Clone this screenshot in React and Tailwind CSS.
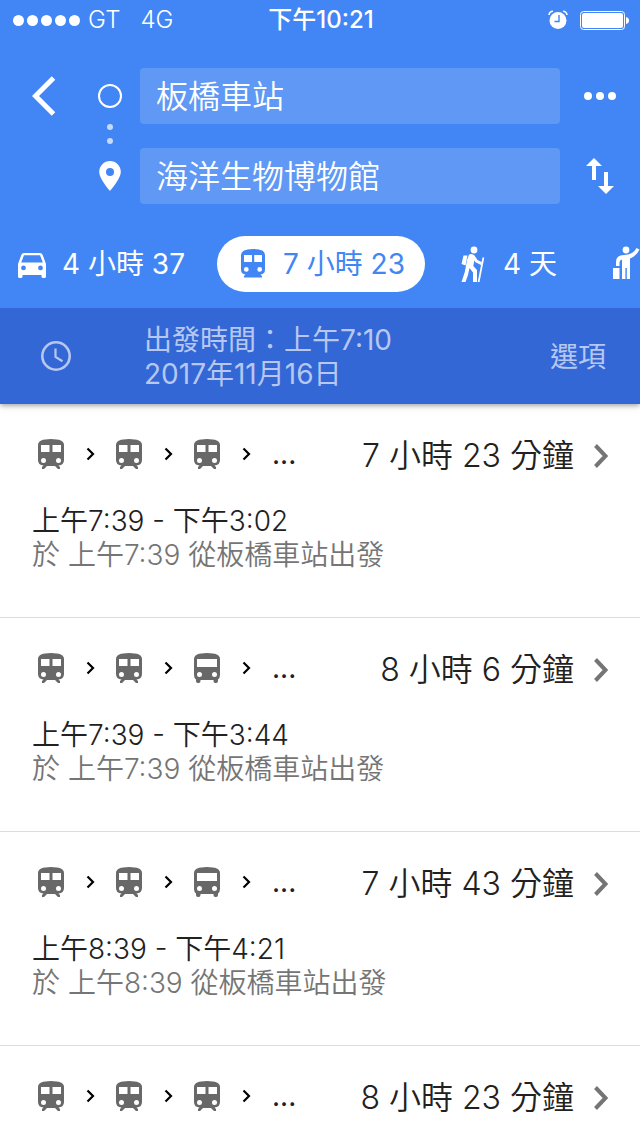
import React, { useState } from 'react';

const MODES = [
  { id: 'drive', label: '4 小時 37', name: '開車', Icon: CarIcon },
  { id: 'transit', label: '7 小時 23', name: '大眾運輸', Icon: TransitIcon },
  { id: 'walk', label: '4 天', name: '步行', Icon: HikerIcon },
  { id: 'ride', label: '', name: '叫車', Icon: HailIcon },
];

const ROUTES = [
  { steps: ['train', 'train', 'train'], duration: '7 小時 23 分鐘', time: '上午7:39 - 下午3:02', from: '於 上午7:39 從板橋車站出發' },
  { steps: ['train', 'train', 'bus'], duration: '8 小時 6 分鐘', time: '上午7:39 - 下午3:44', from: '於 上午7:39 從板橋車站出發' },
  { steps: ['train', 'train', 'bus'], duration: '7 小時 43 分鐘', time: '上午8:39 - 下午4:21', from: '於 上午8:39 從板橋車站出發' },
  { steps: ['train', 'train', 'train'], duration: '8 小時 23 分鐘' },
];

function CarIcon() {
  return (
    <svg viewBox="0 0 32 32" className="size-8 shrink-0" fill="currentColor" aria-hidden="true">
      <path
        fillRule="evenodd"
        d="M8 5h16q2 0 2.700 2L30 16v12.500q0 1.500-1.500 1.500h-1.500q-1.500 0-1.500-1.500V27H6.500v1.500Q6.500 30 5 30H3.500Q2 30 2 28.500V16L5.300 7Q6 5 8 5ZM8 7.200 5.200 14.500h21.600L24 7.200ZM7.500 17.500a2.400 2.400 0 1 0 0 4.800 2.400 2.400 0 0 0 0-4.800ZM24.500 17.500a2.400 2.400 0 1 0 0 4.800 2.400 2.400 0 0 0 0-4.800Z"
      />
    </svg>
  );
}

function TransitIcon() {
  return (
    <svg viewBox="0 0 32 32" className="size-8 shrink-0" fill="currentColor" aria-hidden="true">
      <path
        fillRule="evenodd"
        d="M4 7q0-6 12-6t12 6v14.500q0 4.500-4.500 5L25 28v1.500H7V28l1.500-1.500Q4 26 4 21.500ZM7 7v7h8V7ZM17.200 7v7H25V7ZM9.300 19a2.400 2.400 0 1 0 0 4.800 2.400 2.400 0 0 0 0-4.800ZM22.700 19a2.400 2.400 0 1 0 0 4.800 2.400 2.400 0 0 0 0-4.800Z"
      />
    </svg>
  );
}

function HikerIcon() {
  return (
    <svg viewBox="0 0 32 38" className="h-[38px] w-8 shrink-0" fill="currentColor" aria-hidden="true">
      <circle cx="17" cy="5" r="3.400" />
      <path d="M6.500 10.500h4L8.500 20.500 4.500 19Z" />
      <path d="M12 9.500q3-1.500 5.500 1l3 4.500 4.500 2.300-1 2.600-5.500-2.700-1.200-1.700-1 5.500 3.700 4V37h-4V27.500L12.500 23 11 30 8.500 37h-4l3.300-10 2.200-12Z" />
      <path d="M25.500 12.500h1.800l-4.800 24.500h-1.800Z" />
    </svg>
  );
}

function HailIcon() {
  return (
    <svg viewBox="0 0 32 38" className="h-[38px] w-8 shrink-0" fill="currentColor" aria-hidden="true">
      <circle cx="17" cy="5" r="3.400" />
      <path d="M4 23h6.500v11H4Z" />
      <path d="M7 21v-4q0-7 8-7 9 0 12.500-7l3 1.500Q27.500 11 21 13.500V34h-3.200V23h-1.400v11H13V14.500q-2.500.5-2.500 3V21Z" />
    </svg>
  );
}

function StepIcon({ type }) {
  if (type === 'bus') {
    return (
      <svg viewBox="0 0 26 36" className="h-9 w-[26px]" fill="currentColor" role="img" aria-label="公車">
        <path
          fillRule="evenodd"
          d="M0 9q0-6 13-6t13 6v16q0 3-2 4.500V31q0 2-1.800 2h-.9q-1.800 0-1.800-2v-1h-13v1q0 2-1.800 2h-.9Q2 33 2 31v-1.500Q0 28 0 25ZM3 9v8h20V9ZM5.500 22a2.500 2.500 0 1 0 0 5 2.500 2.500 0 0 0 0-5ZM20.500 22a2.500 2.500 0 1 0 0 5 2.500 2.500 0 0 0 0-5Z"
        />
      </svg>
    );
  }
  return (
    <svg viewBox="0 0 26 36" className="h-9 w-[26px]" fill="currentColor" role="img" aria-label="火車">
      <path
        fillRule="evenodd"
        d="M0 9q0-6 13-6t13 6v15q0 5-5.500 5.500l1.500 1.500v2h-2L17 30H9l-3 3H4v-2l1.500-1.500Q0 29 0 24ZM3 9v7h8.500V9ZM14.500 9v7H23V9ZM5.500 22a2.500 2.500 0 1 0 0 5 2.500 2.500 0 0 0 0-5ZM20.500 22a2.500 2.500 0 1 0 0 5 2.500 2.500 0 0 0 0-5Z"
      />
    </svg>
  );
}

function StatusBar() {
  return (
    <div className="grid h-10 grid-cols-[1fr_auto_1fr] items-center pr-[11px] pl-[13px] text-2xl">
      <div className="flex items-center">
        <div className="mr-2 flex gap-[3px]">
          {[1, 2, 3, 4, 5].map((n) => (
            <span key={n} className="size-[11px] rounded-full bg-white" />
          ))}
        </div>
        <span className="font-light">GT</span>
        <span className="ml-5 font-light">4G</span>
      </div>
      <span className="font-medium">下午10:21</span>
      <div className="flex items-center justify-end gap-3">
        <svg viewBox="0 0 20 20" className="size-5" aria-hidden="true">
          <circle cx="10" cy="10.500" r="8.500" fill="white" />
          <path d="M1 5Q1.500 1.500 5 1.300M15 1.300q3.500.2 4 3.700" fill="none" stroke="white" strokeWidth="1.600" />
          <path d="M11 5V11.500H6.500" fill="none" stroke="#4285f4" strokeWidth="1.400" />
        </svg>
        <svg viewBox="0 0 49 20" className="h-5 w-[49px]" fill="white" aria-hidden="true">
          <rect x="0.500" y="1.500" width="44" height="18" rx="3" fill="none" stroke="white" />
          <rect x="2" y="3" width="41" height="15" rx="2" />
          <path d="M46 7q3 .5 3 3.500T46 14Z" />
        </svg>
      </div>
    </div>
  );
}

function PlaceInput({ label, value, onChange }) {
  return (
    <div className="pl-2">
      <input
        type="text"
        aria-label={label}
        value={value}
        onChange={(e) => onChange(e.target.value)}
        className="h-14 w-full rounded bg-white/16 px-4 pb-1 font-['Noto_Sans_CJK_TC',sans-serif] text-[32px] leading-[52px] font-[350] text-white outline-none"
      />
    </div>
  );
}

function RouteRow({ route }) {
  return (
    <li className="border-b border-[#dcdcdc]">
      <a href="#route" className="block pt-8 pr-8 pb-[45px] pl-8">
        <div className="flex h-10 items-start justify-between">
          <div className="flex gap-5 pl-[6px] text-[#686868]">
            {route.steps.map((type, i) => (
              <React.Fragment key={i}>
                <StepIcon type={type} />
                <svg viewBox="0 0 12 36" className="h-9 w-3" fill="none" stroke="black" strokeWidth="2.200" aria-hidden="true">
                  <path d="m3.500 12.500 5.500 5.500-5.500 5.500" />
                </svg>
              </React.Fragment>
            ))}
            <span className="text-[28px] leading-9 text-[#212121]">...</span>
          </div>
          <div className="flex items-center gap-5">
            <span className="text-[32px] leading-10 font-[350] text-[#212121]">{route.duration}</span>
            <svg viewBox="0 0 14 24" className="h-6 w-[14px]" fill="none" stroke="#757575" strokeWidth="4" aria-hidden="true">
              <path d="m1.500 1.500 10 10.500-10 10.500" />
            </svg>
          </div>
        </div>
        {route.time && (
          <>
            <p className="mt-7 text-[28px] leading-[34px] font-[350] text-[#212121]">{route.time}</p>
            <p className="text-[28px] leading-[34px] font-[350] text-[#757575]">{route.from}</p>
          </>
        )}
      </a>
    </li>
  );
}

const App = () => {
  const [origin, setOrigin] = useState('板橋車站');
  const [destination, setDestination] = useState('海洋生物博物館');
  const [mode, setMode] = useState('transit');

  return (
    <div className="flex h-screen flex-col overflow-hidden bg-white font-['Inter','Noto_Sans_CJK_TC',sans-serif]">
      <header className="relative z-10 bg-[#4285f4] text-white">
        <StatusBar />

        {/* Origin and destination */}
        <div className="grid grid-cols-[88px_44px_1fr_80px] items-center pt-7">
          <button type="button" aria-label="返回" className="flex justify-center">
            <svg viewBox="0 0 24 40" className="h-10 w-6" fill="none" stroke="white" strokeWidth="5" aria-hidden="true">
              <path d="M21.500 2 3.500 20l18 18" />
            </svg>
          </button>
          <span className="size-6 justify-self-center rounded-full border-2 border-white" />
          <PlaceInput label="起點" value={origin} onChange={setOrigin} />
          <button type="button" aria-label="更多" className="flex justify-center gap-1">
            <span className="size-2 rounded-full bg-white" />
            <span className="size-2 rounded-full bg-white" />
            <span className="size-2 rounded-full bg-white" />
          </button>

          <div className="col-start-2 flex h-6 flex-col items-center gap-2">
            <span className="size-[6px] shrink-0 rounded-full bg-white/70" />
            <span className="size-[6px] shrink-0 rounded-full bg-white/70" />
          </div>

          <svg viewBox="0 0 22 30" className="col-start-2 h-[30px] w-[22px] justify-self-center" fill="white" aria-hidden="true">
            <path fillRule="evenodd" d="M11 0a10.800 10.800 0 0 1 10.800 10.800C21.800 18 11 30 11 30S.2 18 .2 10.800A10.800 10.800 0 0 1 11 0Zm0 7a4 4 0 1 0 0 8 4 4 0 0 0 0-8Z" />
          </svg>
          <PlaceInput label="目的地" value={destination} onChange={setDestination} />
          <button type="button" aria-label="對調" className="flex justify-center">
            <svg viewBox="0 0 28 36" className="h-9 w-7" fill="white" aria-hidden="true">
              <path d="M8 0l8 8h-6v14H6V8H0ZM18 14h4v14h6l-8 8-8-8h6Z" />
            </svg>
          </button>
        </div>

        {/* Travel mode tabs */}
        <nav className="-ml-1 flex gap-3 overflow-hidden pt-8 pb-4">
          {MODES.map(({ id, label, name, Icon }) => (
            <button
              key={id}
              type="button"
              aria-label={label ? undefined : name}
              aria-pressed={mode === id}
              onClick={() => setMode(id)}
              className={
                mode === id
                  ? 'flex h-14 shrink-0 items-center gap-[14px] rounded-full bg-white px-5 text-[28px] text-[#4285f4]'
                  : 'flex h-14 shrink-0 items-center gap-[14px] rounded-full px-5 text-[28px] text-white'
              }
            >
              <Icon />
              {label && <span>{label}</span>}
            </button>
          ))}
        </nav>
      </header>

      {/* Departure time */}
      <div className="relative flex h-24 shrink-0 items-center bg-[#3367d6] pr-[34px] pl-10 text-[28px] leading-[34px] text-[#b7c7f0] shadow-[0_1px_6px_rgba(0,0,0,0.45)]">
        <svg viewBox="0 0 32 32" className="size-8" fill="none" stroke="currentColor" strokeWidth="2.600" aria-hidden="true">
          <circle cx="16" cy="16" r="13.700" />
          <path d="M15.500 8.500V17l7 4.200" strokeWidth="2.200" />
        </svg>
        <button type="button" className="ml-18 flex-1 pt-[2px] text-left">
          出發時間：上午7:10
          <br />
          2017年11月16日
        </button>
        <button type="button" className="pt-[2px]">選項</button>
      </div>

      <ul className="min-h-0 flex-1 overflow-hidden">
        {ROUTES.map((route, i) => (
          <RouteRow key={i} route={route} />
        ))}
      </ul>
    </div>
  );
};

export default App;
